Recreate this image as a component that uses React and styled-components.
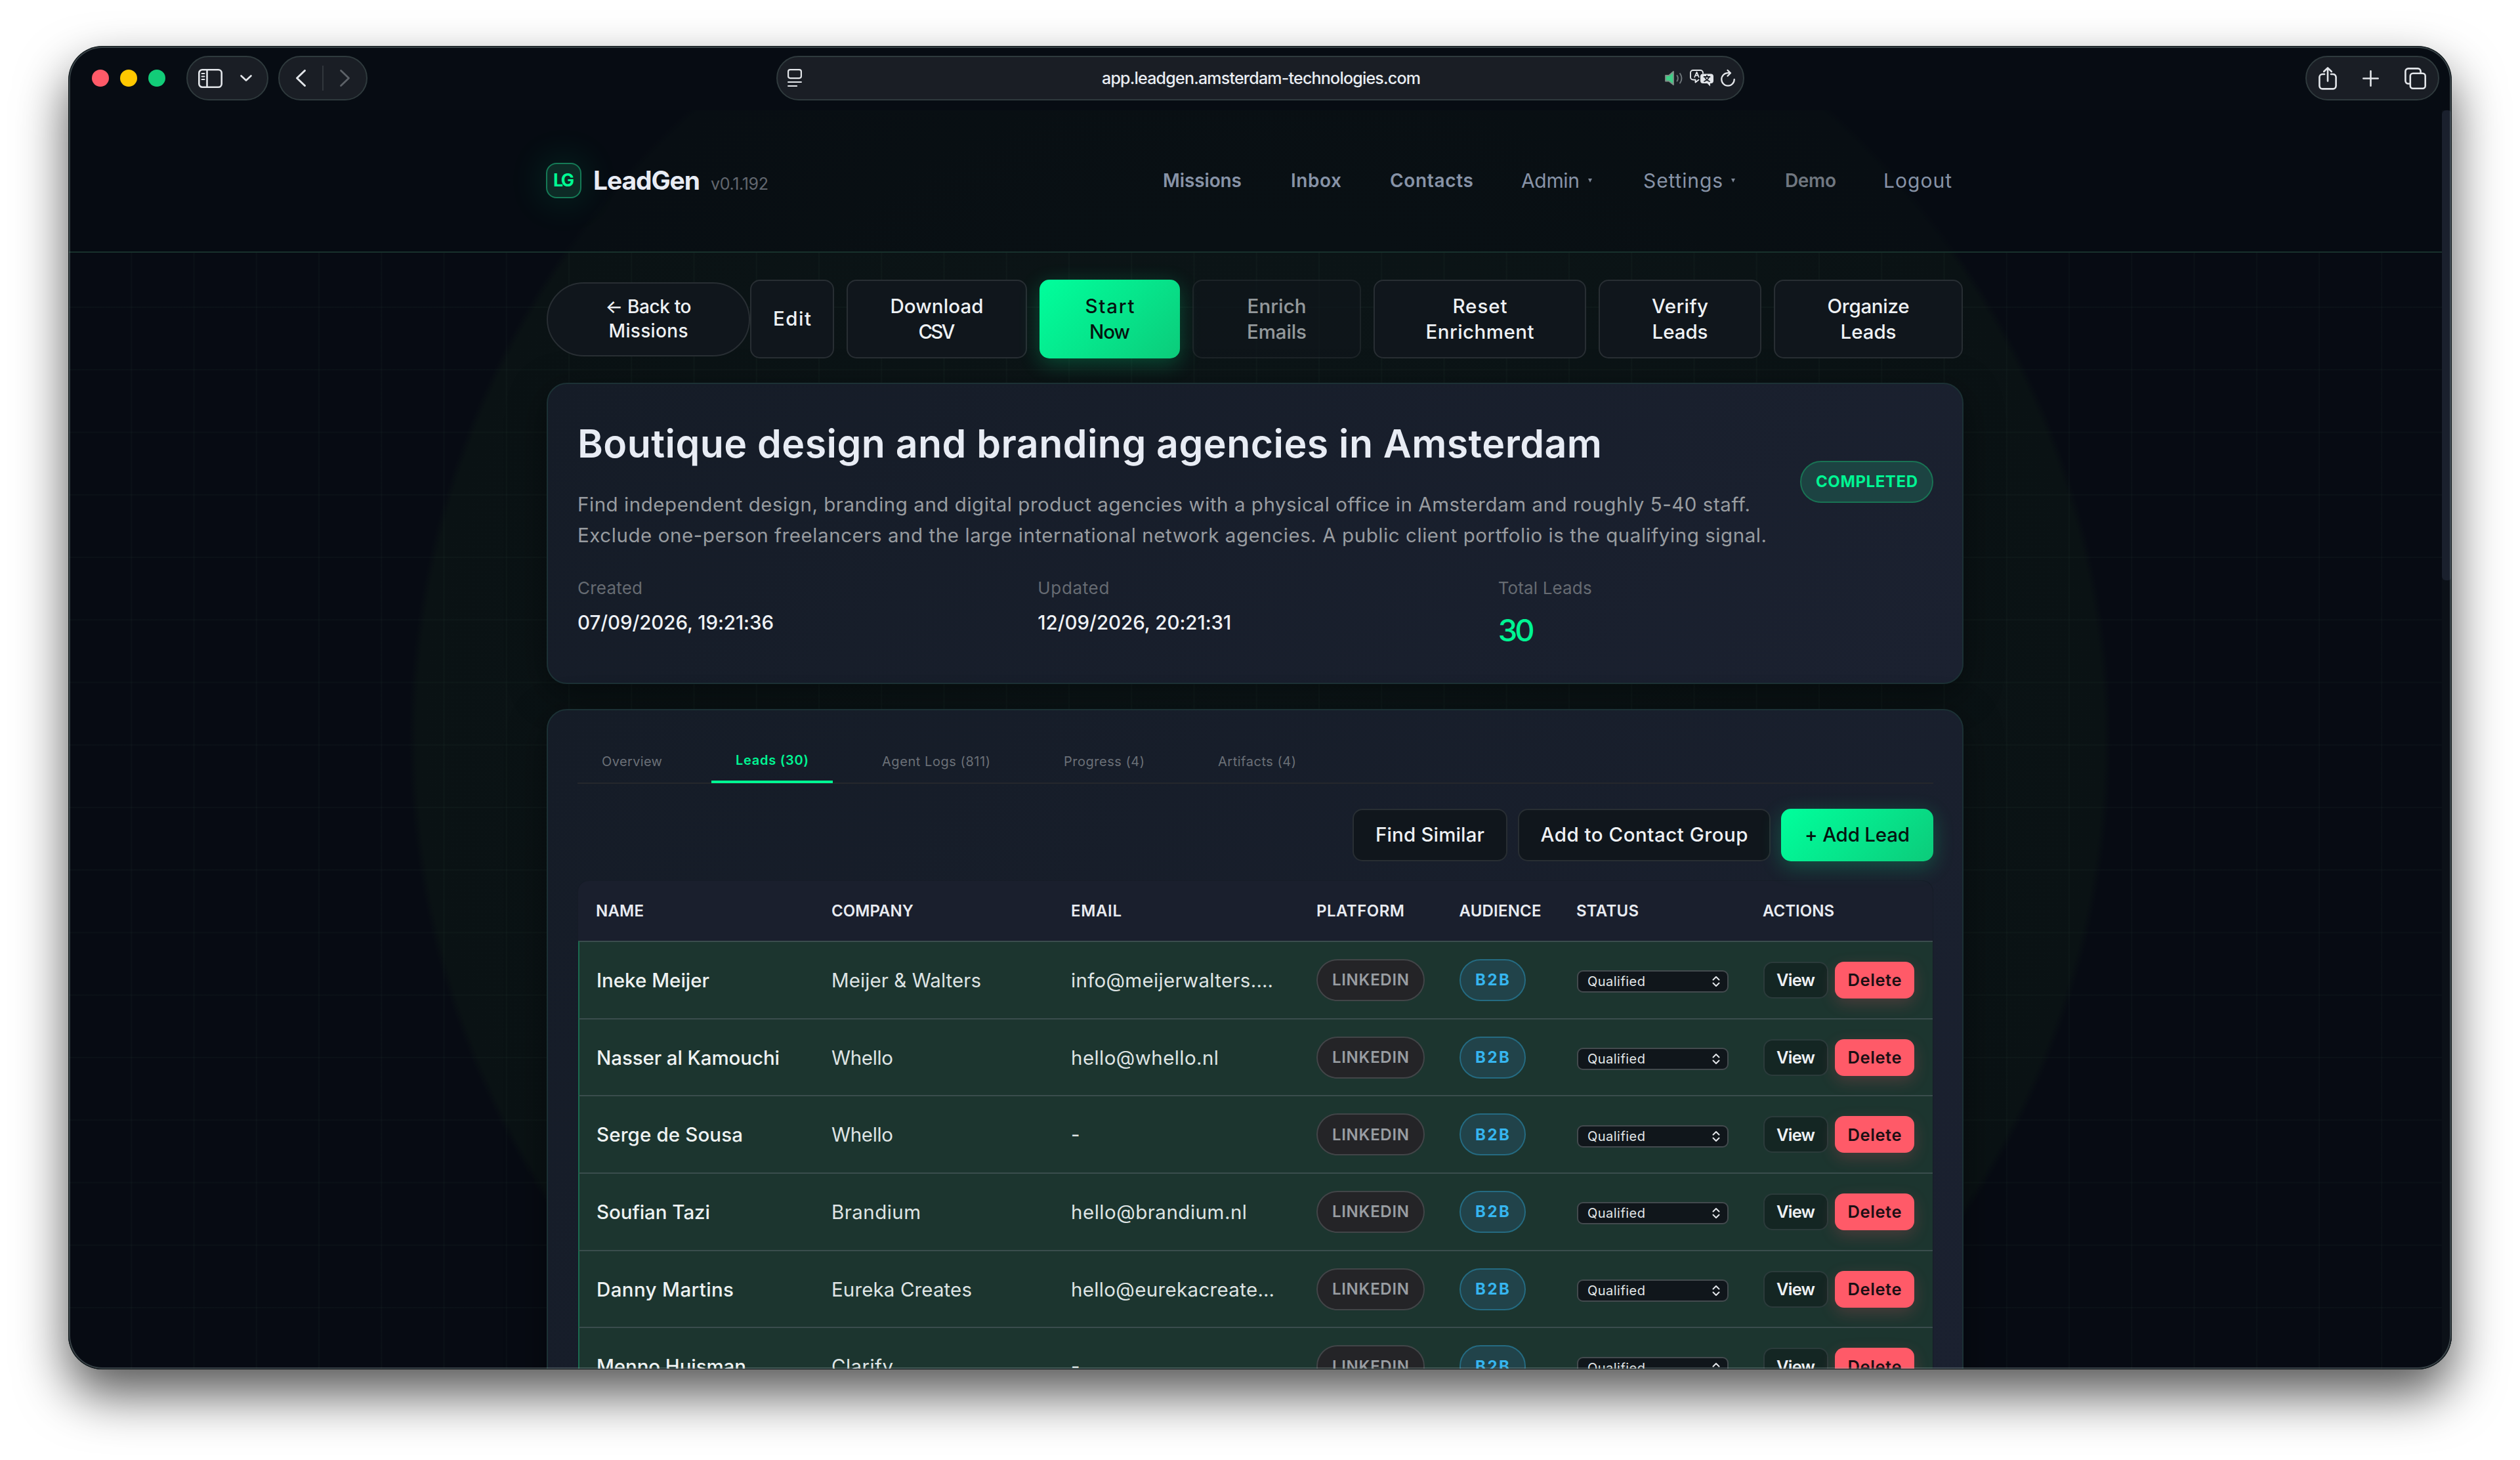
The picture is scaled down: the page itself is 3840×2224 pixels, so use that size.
import { useLayoutEffect, useRef, useState } from "react";
import styled, { createGlobalStyle, css } from "styled-components";

const GlobalStyle = createGlobalStyle`
  * {
    box-sizing: border-box;
  }
  body {
    margin: 0;
    background: #ffffff;
    font-family: Inter, "Liberation Sans", sans-serif;
    -webkit-font-smoothing: antialiased;
  }
`;

const Desktop = styled.div`
  width: 3840px;
  height: 2224px;
  padding: 70px 104px 0;
  overflow: hidden;
`;

const Window = styled.div`
  position: relative;
  width: 3632px;
  height: 2016px;
  display: flex;
  flex-direction: column;
  overflow: hidden;
  border-radius: 52px;
  background: #070c13;

  /* rim light drawn over the page content */
  &::after {
    content: "";
    position: absolute;
    inset: 0;
    border-radius: 52px;
    pointer-events: none;
    box-shadow: inset 0 0 0 1px #0b1214, inset 0 0 0 3px rgba(140, 160, 160, 0.36);
  }
`;

const Shadow = styled.div`
  border-radius: 52px;
  width: 3632px;
  box-shadow: 0 38px 78px rgba(0, 0, 0, 0.66);
`;

const Fitted = styled.span`
  display: inline-block;
  white-space: nowrap;
`;

/* Tracks a label so that it fills the given width */
const Fit = ({ w, children }) => {
  const ref = useRef(null);
  const [track, setTrack] = useState(0);
  useLayoutEffect(() => {
    const natural = ref.current.getBoundingClientRect().width;
    setTrack((w - natural) / (children.length - 1));
  }, []);
  return (
    <Fitted
      ref={ref}
      style={{ letterSpacing: `${track}px`, marginRight: `${-track}px` }}
    >
      {children}
    </Fitted>
  );
};

/* ---------- browser chrome ---------- */

const Chrome = styled.div`
  flex: none;
  height: 98px;
  padding: 15px 19px 0 36px;
  display: grid;
  grid-template-columns: 1fr 1475px 1fr;
  align-items: start;
`;

const ChromeSide = styled.div`
  display: flex;
  align-items: center;
  justify-content: ${({ $end }) => ($end ? "flex-end" : "flex-start")};
  margin-right: ${({ $end }) => ($end ? "0" : "-17px")};
  height: 68px;
`;

const Lights = styled.div`
  display: flex;
  gap: 17px;
  margin-right: 32px;
`;

const Light = styled.i`
  width: 26px;
  height: 26px;
  border-radius: 50%;
  background: ${({ $color }) => $color};
`;

const Pill = styled.div`
  width: ${({ $w }) => $w}px;
  height: 68px;
  display: flex;
  align-items: center;
  justify-content: space-between;
  padding: ${({ $pad }) => $pad};
  margin-right: ${({ $mr }) => $mr || 0}px;
  border-radius: 34px;
  border: 2px solid #2f3a3d;
  background: #1a1e25;
`;

const Divider = styled.i`
  width: 2px;
  height: 38px;
  background: #31363c;
`;

const Address = styled(Pill)`
  margin-left: -8px;
  font-size: 25px;
  font-weight: 500;
  color: #e9edf2;
`;

const AddressIcons = styled.div`
  width: 107px;
  display: flex;
  align-items: center;
  justify-content: space-between;
`;

const Stroke = styled.svg`
  display: block;
  flex: none;
  overflow: visible;
  fill: none;
  stroke: ${({ $color }) => $color || "#e3e6ea"};
  stroke-width: ${({ $sw }) => $sw || 2.6};
  stroke-linecap: round;
  stroke-linejoin: round;
`;

const SidebarIcon = () => (
  <Stroke width="37" height="29" viewBox="0 0 37 29">
    <rect x="1.3" y="1.3" width="34.4" height="26.4" rx="5" />
    <path d="M13.5 1.5v26" />
    <path d="M5.5 7h4M5.5 11.5h4M5.5 16h4" strokeWidth="2" />
  </Stroke>
);

const ReaderIcon = () => (
  <Stroke width="22" height="28" viewBox="0 0 22 28" $sw={2.2}>
    <rect x="1.1" y="1.1" width="19.8" height="13" rx="3" />
    <path d="M1.1 20h19.8M1.1 26h13" />
  </Stroke>
);

const SpeakerIcon = () => (
  <Stroke width="27" height="22" viewBox="0 0 27 22" $color="#6d7579" $sw={2}>
    <path
      d="M1 7h5L13 1v20L6 15.500H1z"
      fill="#3fcf86"
      stroke="#7f8f88"
      strokeWidth="1.800"
    />
    <path d="M18.500 7q2.800 4.200 0 8.500M23 4q5 7.200 0 14.500" />
  </Stroke>
);

const TranslateIcon = () => (
  <Stroke width="36" height="26" viewBox="0 0 36 26" $sw={1.9}>
    <path d="M13.500 15.500L8.500 19.500v-4H5a4 4 0 0 1-4-4V5a4 4 0 0 1 4-4h11a4 4 0 0 1 4 4v.5" />
    <path d="M7.200 11.500L10.500 3.800l3.300 7.700M8.400 9h4.200" strokeWidth="1.700" />
    <path
      d="M20 6.500h12a4 4 0 0 1 4 4v6.500a4 4 0 0 1-4 4h-1v4.500L26.500 21H20a4 4 0 0 1-4-4v-6.500a4 4 0 0 1 4-4z"
      fill="#e3e6ea"
      stroke="none"
    />
    <path
      d="M21.500 11h9M26 9v2M29 11.500q-1.500 4.500-7 6.500M23 11.500q1.500 4.500 7 6.500"
      stroke="#1a1e25"
      strokeWidth="1.800"
    />
  </Stroke>
);

const ReloadIcon = () => (
  <Stroke width="22" height="26" viewBox="0 0 22 26" $sw={2.3}>
    <path d="M13.500 5.200H11a9.700 9.700 0 1 0 9.700 9.700" />
    <path d="M10.500 1l4.500 4.300-4.500 4.500" />
  </Stroke>
);

const ShareIcon = () => (
  <Stroke width="28" height="35" viewBox="0 0 28 35">
    <path d="M9 11H6a4.600 4.600 0 0 0-4.600 4.600v13.200A4.600 4.600 0 0 0 6 33.400h16a4.600 4.600 0 0 0 4.600-4.600V15.600A4.600 4.600 0 0 0 22 11h-3" />
    <path d="M14 21.500V1.500M8.200 7L14 1.400 19.800 7" />
  </Stroke>
);

const CopyIcon = () => (
  <Stroke width="33" height="33" viewBox="0 0 33 33">
    <rect x="8.800" y="8.800" width="22.900" height="22.900" rx="4" />
    <path d="M8.500 24.500H5.800a4.400 4.400 0 0 1-4.400-4.400V5.800a4.400 4.400 0 0 1 4.400-4.400h14.400a4.400 4.400 0 0 1 4.400 4.400v2.500" />
  </Stroke>
);

/* ---------- page ---------- */

const Page = styled.div`
  position: relative;
  flex: 1;
  min-height: 0;
  background: radial-gradient(
      circle at 50% 50%,
      #0d1719,
      #0a1214 1285px,
      #070b13 1297px
    )
    #070b13;
`;

const Scrollbar = styled.div`
  position: absolute;
  top: 0;
  right: 0;
  width: 15px;
  height: 100%;
  background: #0c1118;

  &::before {
    content: "";
    display: block;
    height: 716px;
    border-radius: 6px;
    background: #1a202d;
  }
`;

const Header = styled.header`
  height: 217px;
  padding: 0 745px 2px 728px;
  display: flex;
  align-items: center;
  border-bottom: 2px solid #18312c;
  background: rgba(7, 11, 17, 0.45);
`;

const Logo = styled.div`
  width: 54px;
  height: 54px;
  margin-right: 18px;
  display: flex;
  align-items: center;
  justify-content: center;
  border-radius: 16px;
  border: 2px solid #157a56;
  background: #0d2b26;
  box-shadow: 0 0 60px rgba(0, 255, 150, 0.16);
  font-size: 27px;
  font-weight: 700;
  color: #00ff94;
`;

const Brand = styled.div`
  display: flex;
  align-items: baseline;
  gap: 16px;
  font-size: 39px;
  font-weight: 700;
  color: #e8ecf4;
`;

const Version = styled.span`
  font-size: 25px;
  font-weight: 400;
  color: #62676f;
`;

const Nav = styled.nav`
  flex: 1;
  display: grid;
  grid-template-columns: 195px 151px 200px 186px 216px 150px 104px;
  justify-content: end;
  align-items: center;
  margin-right: 17px;
`;

const NavItem = styled.a`
  display: flex;
  align-items: center;
  gap: 13px;
  font-size: ${({ $bold }) => ($bold ? 28 : 30)}px;
  font-weight: ${({ $bold }) => ($bold ? 600 : 400)};
  color: ${({ $dim }) => ($dim ? "#707780" : "#8793a7")};
`;

const Caret = styled.i`
  border: 3.500px solid transparent;
  border-top: 6px solid #7d8797;
  border-bottom: 0;
`;

const Body = styled.main`
  height: 1701px;
  overflow: hidden;
  padding: 41px 743px 0 729px;
  background-image: linear-gradient(rgba(90, 150, 120, 0.045) 2px, transparent 2px),
    linear-gradient(90deg, rgba(90, 150, 120, 0.045) 2px, transparent 2px);
  background-size: 95.250px 95.250px;
  background-position: 0 82px;
`;

const primary = css`
  border-color: #00f898;
  border-width: 0;
  color: #05130f;
  background: linear-gradient(135deg, #00ff9c 0%, #06e68c 50%, #0ccb7a 100%);
  box-shadow: 0 8px 32px rgba(0, 255, 150, 0.24);
`;

const Button = styled.button`
  flex: none;
  width: ${({ $w }) => $w}px;
  height: ${({ $h }) => $h || 120}px;
  padding: 0;
  display: flex;
  flex-direction: column;
  align-items: center;
  justify-content: center;
  font-family: inherit;
  font-size: 29.500px;
  font-weight: 500;
  line-height: 39.300px;
  color: #eef1f4;
  border: 2px solid #282e33;
  border-radius: 15px;
  background: #10161c;
  ${({ $primary }) => $primary && primary}
  ${({ $disabled }) => $disabled && "opacity: 0.6;"}
`;

const BackButton = styled(Button)`
  border-radius: 57px;
  font-size: 28px;
  line-height: 37.500px;
`;

const ActionBar = styled.div`
  display: flex;
  align-items: center;
  gap: 19px;
  height: 120px;
  margin-bottom: 37px;

  ${BackButton} {
    margin-right: -19px;
  }
`;

const Card = styled.section`
  width: 2159px;
  height: ${({ $h }) => $h}px;
  margin-bottom: 38px;
  padding: 44px 44px 0 45px;
  border: 2px solid #1c3135;
  border-radius: 31px;
  background: linear-gradient(135deg, #151c27, #1b2130);
  box-shadow: 0 14px 60px rgba(0, 0, 0, 0.42);
`;

const CardHead = styled.div`
  height: 209px;
  display: flex;
  align-items: center;
  justify-content: space-between;
`;

const Title = styled.h1`
  margin: 0 0 22px;
  font-size: 59px;
  font-weight: 600;
  line-height: 94px;
  color: #e8ecf4;
`;

const Description = styled.p`
  margin: 0;
  font-size: 29.500px;
  line-height: 46.600px;
  color: #989ca0;
`;

const Badge = styled.span`
  width: ${({ $w }) => $w}px;
  height: 64px;
  flex: none;
  display: inline-flex;
  align-items: center;
  justify-content: center;
  border-radius: 32px;
  border: 2px solid;
  font-size: 24px;
  font-weight: 700;
  ${({ $tone }) =>
    ({
      green: "background: #1c4342; border-color: #197354; color: #00f593;",
      grey: "background: #242427; border-color: #424548; color: #999da2; font-weight: 600;",
      blue: "background: #21434a; border-color: #256b82; color: #36b5ef;",
    })[$tone]}
`;

const Meta = styled.div`
  display: grid;
  grid-template-columns: repeat(3, 1fr);
  column-gap: 38px;
  margin-top: 38px;
`;

const MetaLabel = styled.div`
  font-size: 26px;
  line-height: 40px;
  margin-bottom: 9px;
  color: #666b72;
`;

const MetaValue = styled.div`
  font-size: ${({ $big }) => ($big ? 47 : 29.5)}px;
  font-weight: 500;
  line-height: ${({ $big }) => ($big ? 70 : 46)}px;
  color: ${({ $big }) => ($big ? "#00f593" : "#eef1f5")};
`;

const Tabs = styled.div`
  height: 68px;
  display: flex;
  gap: 38px;
  border-bottom: 2px solid #25272c;
`;

const Tab = styled.div`
  height: 67px;
  padding: 1px 37px 0;
  display: flex;
  align-items: center;
  font-size: 20px;
  font-weight: ${({ $active }) => ($active ? 600 : 400)};
  color: ${({ $active }) => ($active ? "#00f593" : "#6b7077")};
  border-bottom: ${({ $active }) => ($active ? "4px solid #00f593" : "none")};
`;

const TableActions = styled.div`
  display: flex;
  justify-content: flex-end;
  gap: 16px;
  margin: 38px 0 30px;
`;

const Table = styled.div`
  margin: 0 1px;
  border-radius: 16px 16px 0 0;
  overflow: hidden;
  box-shadow: 0 0 0 1px #161c27;
`;

const columns = css`
  display: grid;
  grid-template-columns: 359px 365px 374px 217.500px 178.500px 284px 1fr;
  align-items: center;
`;

const TableHead = styled.div`
  ${columns}
  height: 91px;
  padding-left: 27px;
  background: #1a1f2d;
  font-size: 24px;
  font-weight: 600;
  color: #e8ebf1;
`;

const Row = styled.div`
  ${columns}
  height: 117.700px;
  padding-left: 25px;
  font-size: 29.500px;
  color: #dfe4e4;
  border-top: 2px solid #3a4d4d;
  border-left: 2px solid #1b6b50;
  background: #1c352f;
`;

const Name = styled.span`
  font-weight: 500;
  color: #eef2f2;
  padding-left: 1px;
`;

const Select = styled.div`
  width: 231px;
  height: 34px;
  margin: 5px 0 0 1px;
  padding: 0 11px 0 14px;
  display: flex;
  align-items: center;
  justify-content: space-between;
  border: 2px solid #434a4e;
  border-radius: 9px;
  background: #10161b;
  font-size: 20px;
  color: #e3e7e9;
`;

const RowActions = styled.div`
  display: flex;
  gap: 10px;
  padding-left: 1px;
`;

const SmallButton = styled(Button)`
  border-radius: 14px;
  font-size: 25.500px;
  font-weight: 600;
  border-color: #2b3b3b;
  background: #142623;
  ${({ $danger }) =>
    $danger &&
    css`
      border: 0;
      color: #1c0f14;
      background: #ff5a68;
      box-shadow: 0 8px 24px rgba(255, 90, 104, 0.2);
    `}
`;

const NAV = [
  { label: "Missions", w: 120, bold: true },
  { label: "Inbox", w: 77, bold: true },
  { label: "Contacts", w: 127, bold: true },
  { label: "Admin", w: 89, caret: true },
  { label: "Settings", w: 121, caret: true },
  { label: "Demo", w: 78, bold: true, dim: true },
  { label: "Logout", w: 104 },
];

const ACTIONS = [
  { w: 128, lines: [["Edit", 58]] },
  { w: 275, lines: [["Download", 142], ["CSV", 56]] },
  { w: 214, lines: [["Start", 75], ["Now", 62]], primary: true },
  { w: 257, lines: [["Enrich", 90], ["Emails", 91]], disabled: true },
  { w: 324, lines: [["Reset", 83], ["Enrichment", 165]] },
  { w: 248, lines: [["Verify", 86], ["Leads", 85]] },
  { w: 288, lines: [["Organize", 125], ["Leads", 85]] },
];

const TABS = [
  { label: "Overview", w: 92 },
  { label: "Leads (30)", w: 111, active: true },
  { label: "Agent Logs (811)", w: 165 },
  { label: "Progress (4)", w: 123 },
  { label: "Artifacts (4)", w: 119 },
];

const HEADINGS = [
  ["NAME", 73],
  ["COMPANY", 125],
  ["EMAIL", 77],
  ["PLATFORM", 134],
  ["AUDIENCE", 125],
  ["STATUS", 95],
  ["ACTIONS", 109],
];

const LEADS = [
  { name: ["Ineke Meijer", 172], company: ["Meijer & Walters", 228], email: ["info@meijerwalters.…", 308] },
  { name: ["Nasser al Kamouchi", 279], company: ["Whello", 94], email: ["hello@whello.nl", 225] },
  { name: ["Serge de Sousa", 223], company: ["Whello", 94], email: ["-", 12] },
  { name: ["Soufian Tazi", 173], company: ["Brandium", 136], email: ["hello@brandium.nl", 268] },
  { name: ["Danny Martins", 209], company: ["Eureka Creates", 214], email: ["hello@eurekacreate…", 310] },
  { name: ["Menno Huisman", 228], company: ["Clarify", 94], email: ["-", 12] },
];

const LeadText = ({ value: [text, w] }) =>
  text.length > 1 ? <Fit w={w}>{text}</Fit> : text;

const App = () => (
  <Desktop>
    <GlobalStyle />
    <Shadow>
      <Window>
        <Chrome>
          <ChromeSide>
            <Lights>
              <Light $color="#ff5a68" />
              <Light $color="#ffc800" />
              <Light $color="#12cc78" />
            </Lights>
            <Pill $w={125} $pad="0 23px 0 16px" $mr={15}>
              <SidebarIcon />
              <Stroke width="18" height="10" viewBox="0 0 18 10">
                <path d="M1.500 1.500L9 8.500l7.500-7" />
              </Stroke>
            </Pill>
            <Pill $w={136} $pad="0 25px">
              <Stroke width="15" height="26" viewBox="0 0 15 26" $sw={3}>
                <path d="M13.500 1.500L1.500 13l12 11.500" />
              </Stroke>
              <Divider />
              <Stroke width="15" height="26" viewBox="0 0 15 26" $sw={2.8} $color="#5d6268">
                <path d="M1.500 1.500l12 11.500-12 11.500" />
              </Stroke>
            </Pill>
          </ChromeSide>
          <Address $w={1475} $pad="0 12px 0 15px">
            <AddressIcons>
              <ReaderIcon />
            </AddressIcons>
            <Fit w={486}>app.leadgen.amsterdam-technologies.com</Fit>
            <AddressIcons>
              <SpeakerIcon />
              <TranslateIcon />
              <ReloadIcon />
            </AddressIcons>
          </Address>
          <ChromeSide $end>
            <Pill $w={204} $pad="0 18px">
              <ShareIcon />
              <Stroke width="25" height="25" viewBox="0 0 25 25">
                <path d="M12.500 1.300v22.400M1.300 12.500h22.400" />
              </Stroke>
              <CopyIcon />
            </Pill>
          </ChromeSide>
        </Chrome>

        <Page>
          <Header>
            <Logo>
              <Fit w={32}>LG</Fit>
            </Logo>
            <Brand>
              <Fit w={163}>LeadGen</Fit>
              <Version>
                <Fit w={88}>v0.1.192</Fit>
              </Version>
            </Brand>
            <Nav>
              {NAV.map(({ label, w, bold, dim, caret }) => (
                <NavItem key={label} $bold={bold} $dim={dim}>
                  <Fit w={w}>{label}</Fit>
                  {caret && <Caret />}
                </NavItem>
              ))}
            </Nav>
          </Header>

          <Body>
            <ActionBar>
              <BackButton $w={310} $h={113}>
                <Fit w={131}>← Back to</Fit>
                <Fit w={121}>Missions</Fit>
              </BackButton>
              {ACTIONS.map(({ w, lines, primary, disabled }) => (
                <Button key={lines[0][0]} $w={w} $primary={primary} $disabled={disabled}>
                  {lines.map(([text, width]) => (
                    <Fit key={text} w={width}>
                      {text}
                    </Fit>
                  ))}
                </Button>
              ))}
            </ActionBar>

            <Card $h={459}>
              <CardHead>
                <div>
                  <Title>
                    <Fit w={1561}>Boutique design and branding agencies in Amsterdam</Fit>
                  </Title>
                  <Description>
                    <Fit w={1787}>
                      Find independent design, branding and digital product agencies with a physical office in Amsterdam and roughly 5-40 staff.
                    </Fit>
                    <br />
                    <Fit w={1812}>
                      Exclude one-person freelancers and the large international network agencies. A public client portfolio is the qualifying signal.
                    </Fit>
                  </Description>
                </div>
                <Badge $w={203} $tone="green">
                  <Fit w={155}>COMPLETED</Fit>
                </Badge>
              </CardHead>
              <Meta>
                <div>
                  <MetaLabel>
                    <Fit w={99}>Created</Fit>
                  </MetaLabel>
                  <MetaValue>
                    <Fit w={299}>07/09/2026, 19:21:36</Fit>
                  </MetaValue>
                </div>
                <div>
                  <MetaLabel>
                    <Fit w={109}>Updated</Fit>
                  </MetaLabel>
                  <MetaValue>
                    <Fit w={295}>12/09/2026, 20:21:31</Fit>
                  </MetaValue>
                </div>
                <div>
                  <MetaLabel>
                    <Fit w={143}>Total Leads</Fit>
                  </MetaLabel>
                  <MetaValue $big>
                    <Fit w={56}>30</Fit>
                  </MetaValue>
                </div>
              </Meta>
            </Card>

            <Card $h={1100}>
              <Tabs>
                {TABS.map(({ label, w, active }) => (
                  <Tab key={label} $active={active}>
                    <Fit w={w}>{label}</Fit>
                  </Tab>
                ))}
              </Tabs>
              <TableActions>
                <Button $w={236} $h={80}>
                  <Fit w={166}>Find Similar</Fit>
                </Button>
                <Button $w={385} $h={80}>
                  <Fit w={316}>Add to Contact Group</Fit>
                </Button>
                <Button $w={232} $h={80} $primary>
                  <Fit w={160}>+ Add Lead</Fit>
                </Button>
              </TableActions>
              <Table>
                <TableHead>
                  {HEADINGS.map(([text, w]) => (
                    <span key={text}>
                      <Fit w={w}>{text}</Fit>
                    </span>
                  ))}
                </TableHead>
                {LEADS.map((lead) => (
                  <Row key={lead.name[0]}>
                    <Name>
                      <LeadText value={lead.name} />
                    </Name>
                    <span>
                      <LeadText value={lead.company} />
                    </span>
                    <span>
                      <LeadText value={lead.email} />
                    </span>
                    <Badge $w={165} $tone="grey">
                      <Fit w={117}>LINKEDIN</Fit>
                    </Badge>
                    <Badge $w={101} $tone="blue">
                      <Fit w={52}>B2B</Fit>
                    </Badge>
                    <Select>
                      <Fit w={88}>Qualified</Fit>
                      <Stroke width="12" height="16" viewBox="0 0 12 16" $sw={2}>
                        <path d="M1.500 5.500L6 1l4.500 4.500M1.500 10.500L6 15l4.500-4.500" />
                      </Stroke>
                    </Select>
                    <RowActions>
                      <SmallButton $w={99} $h={56}>
                        <Fit w={59}>View</Fit>
                      </SmallButton>
                      <SmallButton $w={121} $h={56} $danger>
                        <Fit w={82}>Delete</Fit>
                      </SmallButton>
                    </RowActions>
                  </Row>
                ))}
              </Table>
            </Card>
          </Body>
          <Scrollbar />
        </Page>
      </Window>
    </Shadow>
  </Desktop>
);

export default App;
